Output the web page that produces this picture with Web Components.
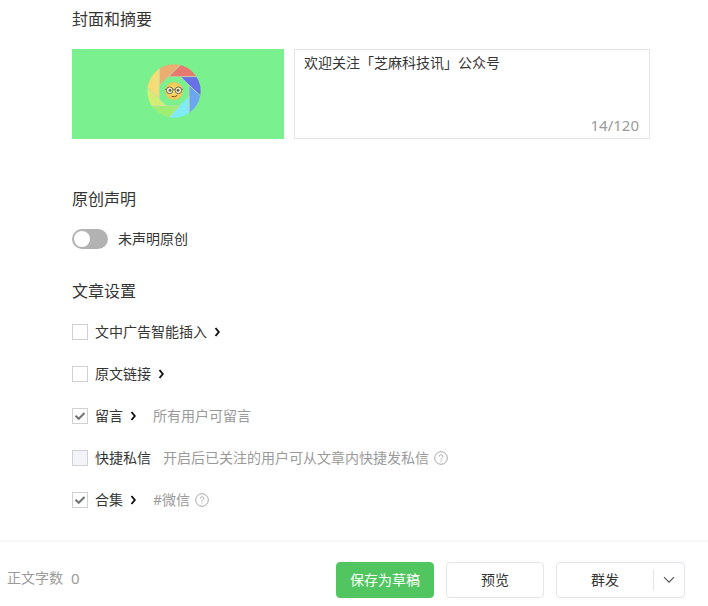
<!DOCTYPE html>
<html lang="zh-CN">
<head>
<meta charset="utf-8">
<meta name="viewport" content="width=device-width, initial-scale=1">
<title>文章设置</title>
<style>
  body { margin: 0; background: #fff; color: #353535; font: 14px/20px "Noto Sans", "Noto Sans CJK SC", sans-serif; }
</style>
</head>
<body>
<article-editor></article-editor>

<template id="t-editor">
  <style>
    :host { display: flex; flex-direction: column; min-height: 100vh; }
    main { flex: 1; padding: 7px 58px 30px 72px; }
    .cover { display: flex; gap: 10px; }
    summary-box { flex: 1; }
    .options { display: flex; flex-direction: column; gap: 22px; }
  </style>
  <main>
    <form-section heading="封面和摘要">
      <div class="cover"><cover-picture></cover-picture><summary-box></summary-box></div>
    </form-section>
    <form-section heading="原创声明" style="--before:48px">
      <toggle-switch>未声明原创</toggle-switch>
    </form-section>
    <form-section heading="文章设置" style="--before:30px; --after:19px">
      <div class="options">
        <option-row arrow>文中广告智能插入</option-row>
        <option-row arrow>原文链接</option-row>
        <option-row arrow checked>留言<span slot="hint">所有用户可留言</span></option-row>
        <option-row disabled>快捷私信<span slot="hint">开启后已关注的用户可从文章内快捷发私信</span><help-icon slot="help"></help-icon></option-row>
        <option-row arrow checked>合集<span slot="hint">#微信</span><help-icon slot="help"></help-icon></option-row>
      </div>
    </form-section>
  </main>
  <action-bar></action-bar>
</template>

<template id="t-section">
  <style>
    :host { display: block; margin-top: var(--before, 0); }
    h2 { margin: 0 0 var(--after, 18px); font-size: 16px; line-height: 24px; font-weight: 400; }
  </style>
  <h2></h2><slot></slot>
</template>

<template id="t-cover">
  <style>
    :host { display: flex; width: 212px; height: 90px; align-items: center; justify-content: center; background: #7af08f; flex: none; }
    svg { width: 54px; height: 54px; margin: 0 8px 6px 0; }
  </style>
  <svg viewBox="261 192 162 162" role="img" aria-label="封面">
    <defs>
      <clipPath id="disc"><circle cx="342" cy="273" r="80"/></clipPath>
      <radialGradient id="face"><stop offset="0" stop-color="#ffe36c"/><stop offset="1" stop-color="#efc454"/></radialGradient>
    </defs>
    <g clip-path="url(#disc)" stroke="#c9ddaa" stroke-width="2">
      <path fill="#e9ae70" d="M298 180H376L298 258Z"/>
      <path fill="#e87970" d="M376 180L326 230H430V180Z"/>
      <path fill="#6870e8" d="M362 230H440V306L387 255Z"/>
      <path fill="#6ca6ef" d="M387 255L440 306V350H387Z"/>
      <path fill="#7eebf7" d="M387 288V370H310L358 317Z"/>
      <path fill="#9fee74" d="M360 317L310 370H250V317Z"/>
      <path fill="#d3ee72" d="M318 317H250V250L298 297Z"/>
      <path fill="#f4dc77" d="M298 297L245 245V180H298Z"/>
    </g>
    <circle cx="342" cy="273" r="43" fill="#7af08f"/>
    <circle cx="342" cy="273" r="27" fill="url(#face)"/>
    <g fill="none" stroke="#776d51" stroke-width="3">
      <circle cx="329" cy="271" r="10" fill="#e7edcf"/><circle cx="355" cy="271" r="10" fill="#e7edcf"/>
      <path d="M315 268H320M364 268H369M338 269Q342 266 346 269"/>
      <path d="M335 289Q344 293 352 286" stroke="#81501f"/>
    </g>
    <circle cx="330" cy="271" r="4" fill="#695943"/><circle cx="354" cy="271" r="4" fill="#695943"/>
  </svg>
</template>

<template id="t-summary">
  <style>
    :host { display: flex; flex-direction: column; box-sizing: border-box; border: 1px solid #e4e5e7; padding: 3px 10px 3px 9px; }
    textarea { flex: 1; min-height: 0; width: 100%; box-sizing: border-box; border: 0; padding: 0; margin: 0; resize: none; outline: 0; background: none; color: inherit; font: inherit; overflow: hidden; }
    output { align-self: flex-end; color: #9a9a9a; font-size: 15px; }
  </style>
  <textarea aria-label="摘要" maxlength="120">欢迎关注「芝麻科技讯」公众号</textarea>
  <output>14/120</output>
</template>

<template id="t-toggle">
  <style>
    :host { display: flex; }
    label { display: flex; gap: 10px; align-items: center; }
    input { appearance: none; width: 36px; height: 20px; margin: 0; padding: 2px; box-sizing: border-box; border-radius: 10px; background: #b2b2b2; display: flex; }
    input::before { content: ""; width: 16px; height: 16px; border-radius: 50%; background: #fff; }
    input:checked { background: #51c55f; justify-content: flex-end; }
  </style>
  <label><input type="checkbox" role="switch"><span><slot></slot></span></label>
</template>

<template id="t-option">
  <style>
    :host { display: flex; align-items: center; line-height: 20px; }
    label { display: flex; gap: 7px; align-items: center; }
    input { appearance: none; width: 16px; height: 16px; margin: 0; border: 1px solid #d0d1d3; background: #fff; box-sizing: border-box; }
    input:disabled { background: #f3f4f9; }
    .box { display: grid; }
    .box > * { grid-area: 1 / 1; }
    .box svg { display: none; pointer-events: none; z-index: 1; }
    input:checked + svg { display: block; }
    button { border: 0; background: none; padding: 0; margin: 0 5px 0 7px; width: 6px; height: 20px; color: #111; display: grid; place-items: center; }
    button[hidden] { display: none; }
    .hint { color: #9a9a9a; margin-left: 12px; display: flex; align-items: center; gap: 5px; }
  </style>
  <label>
    <span class="box"><input type="checkbox"><svg width="16" height="16" viewBox="0 0 16 16" fill="none" stroke="#737373" stroke-width="2"><path d="M3.5 7.7L6.7 10.8L12.5 5"/></svg></span>
    <span><slot></slot></span>
  </label>
  <button type="button" aria-label="设置"><svg width="6" height="10" viewBox="0 0 6 10" fill="none" stroke="currentColor" stroke-width="1.9"><path d="M1.5 1L4.8 5L1.5 9"/></svg></button>
  <span class="hint"><slot name="hint"></slot><slot name="help"></slot></span>
</template>

<template id="t-help">
  <style>
    :host { display: flex; }
    button { border: 0; background: none; padding: 0; width: 14px; height: 14px; display: flex; color: #a5a5a5; }
  </style>
  <button type="button" aria-label="帮助"><svg width="14" height="14" viewBox="0 0 14 14" fill="none" stroke="currentColor"><circle cx="7" cy="7" r="6.3"/><path d="M5.2 5.6C5.2 3.2 8.8 3.2 8.8 5.5C8.8 6.8 7 6.8 7 8.5M7 9.5V10.5"/></svg></button>
</template>

<template id="t-bar">
  <style>
    :host { display: flex; align-items: center; justify-content: space-between; border-top: 2px solid #f7f7f7; padding: 20px 23px 8px 7px; background: #fff; }
    .count { display: flex; gap: 8px; color: #9a9a9a; margin-bottom: 4px; }
    .count b { font-weight: 400; font-size: 15px; }
    .actions { display: flex; gap: 12px; }
    button { height: 36px; width: 98px; box-sizing: border-box; border: 1px solid #e4e5e9; border-radius: 4px; background: #fff; color: #353535; font: inherit; padding: 0; }
    button.primary { background: #51c55f; border-color: #51c55f; color: #fff; }
    .split { display: flex; align-items: center; height: 36px; box-sizing: border-box; border: 1px solid #e4e5e9; border-radius: 4px; }
    .split button { border: 0; height: 20px; background: none; width: 96px; }
    .split button.more { width: 31px; border-left: 1px solid #e4e5e9; border-radius: 0; display: grid; place-items: center; }
  </style>
  <div class="count"><span>正文字数</span><b>0</b></div>
  <div class="actions">
    <button type="button" class="primary">保存为草稿</button>
    <button type="button">预览</button>
    <div class="split">
      <button type="button">群发</button>
      <button type="button" class="more" aria-label="更多"><svg width="12" height="8" viewBox="0 0 12 8" fill="none" stroke="#555" stroke-width="1.2"><path d="M1 1.2L6 6.2L11 1.2"/></svg></button>
    </div>
  </div>
</template>

<script>
  class Base extends HTMLElement {
    constructor() {
      super();
      const t = document.getElementById(this.constructor.template);
      this.attachShadow({ mode: "open" }).append(t.content.cloneNode(true));
    }
    $(s) { return this.shadowRoot.querySelector(s); }
  }
  customElements.define("form-section", class extends Base {
    static template = "t-section";
    connectedCallback() { this.$("h2").textContent = this.getAttribute("heading"); }
  });
  customElements.define("cover-picture", class extends Base { static template = "t-cover"; });
  customElements.define("summary-box", class extends Base {
    static template = "t-summary";
    connectedCallback() {
      const area = this.$("textarea");
      area.addEventListener("input", () => { this.$("output").textContent = area.value.length + "/120"; });
    }
  });
  customElements.define("toggle-switch", class extends Base { static template = "t-toggle"; });
  customElements.define("help-icon", class extends Base { static template = "t-help"; });
  customElements.define("option-row", class extends Base {
    static template = "t-option";
    connectedCallback() {
      this.$("input").checked = this.hasAttribute("checked");
      this.$("input").disabled = this.hasAttribute("disabled");
      this.$("button").hidden = !this.hasAttribute("arrow");
    }
  });
  customElements.define("action-bar", class extends Base { static template = "t-bar"; });
  customElements.define("article-editor", class extends Base { static template = "t-editor"; });
</script>
</body>
</html>
